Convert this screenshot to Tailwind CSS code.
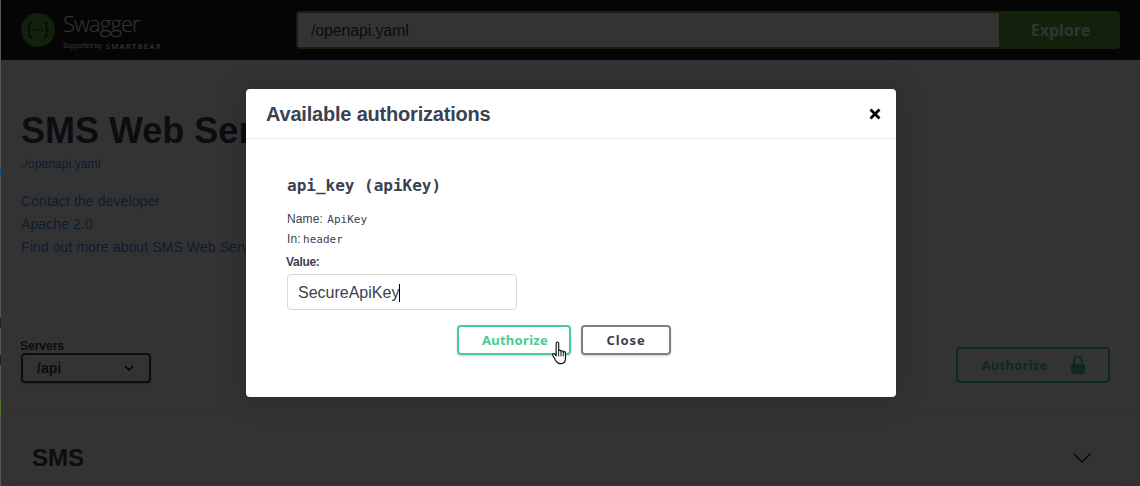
<!doctype html>
<html>
<head>
<meta charset="utf-8">
<script src="https://cdn.jsdelivr.net/npm/@tailwindcss/browser@4"></script>
</head>
<body class="bg-white">
<div class="relative h-[486px] w-[1140px] overflow-hidden bg-white font-['Liberation_Sans',sans-serif] text-[#3b4151]">
  <header class="flex h-[60px] items-center bg-[#1b1b1b] pl-[21px] pr-[20px]">
    <div class="flex w-[275px] items-center gap-[8px]">
      <svg width="34" height="34" viewBox="0 0 34 34" class="shrink-0">
        <circle cx="17" cy="17" r="17" fill="#62a03f"/>
        <g fill="none" stroke="#173646" stroke-width="1.700">
          <path d="M11 9.500c-3.500 0-2.500 2.500-2.500 4.500 0 1.800-.8 3-2 3 1.200 0 2 1.200 2 3 0 2-1 4.500 2.500 4.500"/>
          <path d="M23 9.500c3.500 0 2.500 2.500 2.500 4.500 0 1.800.8 3 2 3-1.200 0-2 1.200-2 3 0 2 1 4.500-2.500 4.500"/>
        </g>
        <g fill="#173646"><circle cx="13" cy="17" r="1"/><circle cx="17" cy="17" r="1"/><circle cx="21" cy="17" r="1"/></g>
      </svg>
      <div class="flex flex-col">
        <span class="font-['Open_Sans',sans-serif] text-[22px] font-light leading-[26px] tracking-[-0.9px] text-white">Swagger<span class="text-[10px]">.</span></span>
        <span class="flex items-center gap-[4px] leading-[10px] text-white"><span class="text-[6.5px]">Supported by</span><span class="font-['Open_Sans',sans-serif] text-[7.5px] font-semibold tracking-[1.4px]">SMARTBEAR</span></span>
      </div>
    </div>
    <div class="flex h-[38px] flex-1 rounded-[4px] border-2 border-[#62a03f] bg-[#62a03f]">
      <div class="flex w-[701px] items-center bg-white pl-[13px] pt-[1px] text-[16px] tracking-[-0.15px] text-[#3b4151]">/openapi.yaml</div>
      <div class="flex flex-1 items-center justify-center pl-[4px] font-['Noto_Sans',sans-serif] text-[16px] font-bold text-white">Explore</div>
    </div>
  </header>

  <main class="px-[21px]">
    <h1 class="mt-[49px] text-[36px] font-bold leading-[44px]">SMS Web Service</h1>
    <a class="mt-[4px] block text-[12px] leading-[14px] tracking-[0.1px] text-[#4990e2]">./openapi.yaml</a>
    <div class="mt-[19px] flex flex-col text-[14px] leading-[23px] tracking-[0.1px] text-[#4990e2]">
      <a>Contact the developer</a>
      <a>Apache 2.0</a>
      <a>Find out more about SMS Web Service</a>
    </div>
    <div class="mt-[81px] flex items-start justify-between pr-[9px]">
      <div class="w-[130px]">
        <div class="-ml-[1px] text-[12px] font-bold leading-[13px]">Servers</div>
        <div class="flex h-[30px] items-center justify-between rounded-[4px] border-2 border-[#41444e] pl-[14px] pr-[15px] text-[14px] font-bold shadow-[0_1px_2px_rgba(0,0,0,0.25)]">
          <span>/api</span>
          <svg width="10" height="7" viewBox="0 0 10 7" fill="none" stroke="#000" stroke-width="1.500"><path d="M1 1l4 4 4-4"/></svg>
        </div>
      </div>
      <div class="mt-[7px] flex h-[36px] w-[154px] items-center justify-center gap-[23px] rounded-[4px] border-2 border-[#49cc90] font-['Noto_Sans',sans-serif] text-[13px] font-bold tracking-[0.3px] text-[#49cc90]">
        <span class="pt-[2px]">Authorize</span>
        <svg width="14" height="18" viewBox="0 0 14 18"><path d="M3 9V4.500a4 4 0 0 1 8 0V7" fill="none" stroke="#49cc90" stroke-width="2.200"/><rect x="0" y="8" width="14" height="10" rx="1.500" fill="#49cc90"/></svg>
      </div>
    </div>
  </main>

  <div class="mt-[30px] border-t border-[#e8e8e8] pl-[21px] pr-[20px]">
    <div class="flex h-[69px] items-center justify-between border-b border-[#d8d8d8] pl-[11px] pr-[29px] pt-[20px]">
      <span class="text-[24px] font-bold">SMS</span>
      <svg width="18" height="10" viewBox="0 0 18 10" fill="none" stroke="#000" stroke-width="1.200"><path d="M.5.500 9 9l8.500-8.500"/></svg>
    </div>
  </div>

  <div class="absolute inset-0 bg-black/80"></div>

  <!-- browser edge artefact in the screenshot -->
  <div class="absolute left-0 top-0 flex h-full w-px flex-col bg-[#555]">
    <div class="mt-[168px] h-[8px] bg-[#1d4f86]"></div>
    <div class="mt-[142px] h-[10px] bg-[#222]"></div>
    <div class="mt-[27px] h-[10px] bg-[#222]"></div>
    <div class="mt-[33px] h-[20px] bg-[#55702a]"></div>
  </div>

  <div class="absolute left-[246px] top-[89px] h-[308px] w-[650px] rounded-[4px] bg-white shadow-[0_0_30px_rgba(0,0,0,0.2)]">
    <div class="flex h-[50px] items-center justify-between border-b border-[#ebebeb] pl-[20px] pr-[15px]">
      <h3 class="text-[20px] font-bold tracking-[-0.2px] text-[#3b4151]">Available authorizations</h3>
      <svg width="12" height="12" viewBox="0 0 12 12" fill="none" stroke="#000" stroke-width="2.800"><path d="M1.500 1.500l9 9M10.500 1.500l-9 9"/></svg>
    </div>
    <div class="pl-[41px] pt-[37px]">
      <h4 class="font-['DejaVu_Sans_Mono',monospace] text-[16px] font-bold leading-[20px]">api_key (apiKey)</h4>
      <p class="mt-[14px] text-[12px] leading-[18px] tracking-[0.1px]">Name: <code class="ml-[1px] font-['DejaVu_Sans_Mono',monospace] text-[11px] tracking-normal">ApiKey</code></p>
      <p class="mt-[1px] text-[12px] leading-[18px] tracking-[0.1px]">In: <code class="-ml-[1px] font-['DejaVu_Sans_Mono',monospace] text-[11px] tracking-normal">header</code></p>
      <label class="-ml-[1px] mt-[6px] block text-[12px] font-bold leading-[15px] tracking-[-0.3px]">Value:</label>
      <div class="mt-[4px] flex h-[36px] w-[230px] items-center rounded-[4px] border border-[#d9d9d9] pl-[10px] pt-[1px] text-[16px] text-[#3b4151]"><span>SecureApiKey</span><span class="h-[18px] w-px bg-black"></span></div>
      <div class="ml-[170px] mt-[15px] flex gap-[10px] font-['Noto_Sans',sans-serif] text-[13px] font-bold tracking-[0.3px]">
        <div class="relative flex h-[30px] w-[114px] items-center justify-center rounded-[4px] border-2 border-[#49cc90] pl-[2px] pt-[2px] text-[#49cc90] shadow-[0_1px_2px_rgba(0,0,0,0.2)]">
          <span>Authorize</span>
          <svg class="absolute left-[92px] top-[14px]" width="18" height="25" viewBox="0 0 18 26"><path d="M5 2.200c0-1.600 2.600-1.600 2.600 0v8.400c0-1.500 2.400-1.500 2.400 0v.6c0-1.400 2.400-1.400 2.400 0v.8c0-1.300 2.300-1.300 2.300 0v6c0 3-1.600 5.500-4.600 5.500H9c-2.500 0-3.600-1.500-4.700-3.500l-2.800-5c-.9-1.500 1-2.700 2.100-1.400L5 15.500Z" fill="#fff" stroke="#111" stroke-width="1.200" stroke-linejoin="round"/><path d="M7.600 11v5M10 11.500v4.500M12.400 12v4" stroke="#111" stroke-width="1"/></svg>
        </div>
        <div class="flex h-[30px] w-[90px] items-center justify-center rounded-[4px] border-2 border-[#808080] pt-[2px] tracking-[0.9px] text-[#3b4151] shadow-[0_1px_2px_rgba(0,0,0,0.2)]">Close</div>
      </div>
    </div>
  </div>
</div>
</body>
</html>
